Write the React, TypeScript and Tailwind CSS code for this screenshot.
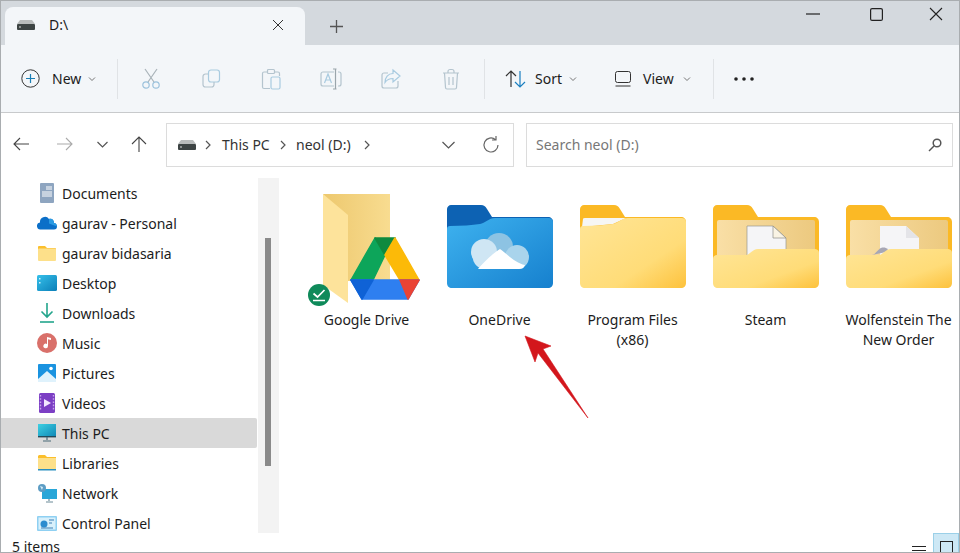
import React from "react";

const Chev = ({ c = "#666", s = 8 }: { c?: string; s?: number }) => (
  <svg width={s} height={s} viewBox="0 0 8 8" fill="none" stroke={c} strokeWidth="0.9"><path d="M1 2.5 4 5.5 7 2.5" /></svg>
);
const Right = () => (
  <svg width="8" height="10" viewBox="0 0 8 10" fill="none" stroke="#555" strokeWidth="1.2"><path d="M2 1 6 5 2 9" /></svg>
);
const DriveIcon = () => (
  <svg width="18" height="10" viewBox="0 0 18 10">
    <path d="M3 0h12l3 4H0z" fill="#b9bcbc" />
    <rect y="4" width="18" height="6" rx="1" fill="#3d4444" />
    <rect x="2" y="6.5" width="2" height="1" fill="#ddd" />
  </svg>
);
const Dis = ({ children }: { children: React.ReactNode }) => (
  <svg width="24" height="24" viewBox="0 0 24 24" fill="none" stroke="#b4c4ce" strokeWidth="1.2">{children}</svg>
);

const BACK = "M4 0h30c3 0 4 1 6 4l5 8h56c3 0 5 2 5 5v45H0V4c0-2 2-4 4-4z";
const FLAT_FRONT = "M0 24c0-2 1-3 3-3 12 0 22-1 30-2 5-1 9-6 15-6h53c3 0 5 1 5 4v61c0 3-2 5-5 5H5c-3 0-5-2-5-5z";

const Yellow = ({ id, children, flat }: { id: string; children?: React.ReactNode; flat?: boolean }) => (
  <svg width="106" height="83" viewBox="0 0 106 83">
    <defs>
      <linearGradient id={id} x1="0" y1="0" x2="1" y2="1">
        <stop offset="0" stopColor="#ffe596" />
        <stop offset="0.65" stopColor="#ffdc78" />
        <stop offset="1" stopColor="#fdc23c" />
      </linearGradient>
      <linearGradient id={`${id}b`} x1="0" y1="0" x2="1" y2="0">
        <stop offset="0" stopColor="#f9dfa6" />
        <stop offset="1" stopColor="#ecc97f" />
      </linearGradient>
    </defs>
    <path d={BACK} fill="#fbb925" />
    {!flat && <rect x="4" y="15" width="98" height="40" rx="2" fill={`url(#${id}b)`} />}
    {children}
    {flat ? (
      <path d={FLAT_FRONT} fill={`url(#${id})`} />
    ) : (
      <path d="M0 54c0-3 2-4 4-4h29c4 0 6-6 12-6h56c3 0 5 1 5 4v30c0 3-2 5-5 5H5c-3 0-5-2-5-5z" fill={`url(#${id})`} />
    )}
  </svg>
);

const Inner = ({ wolf }: { wolf?: boolean }) => (
  <>
    <path d="M34 21h26l13 12v20H34z" fill="#f5f5f7" stroke={wolf ? "none" : "#9a9a90"} strokeWidth="0.7" />
    <path d="M60 21v12h13z" fill={wolf ? "#e4e4e8" : "#f9f3e4"} stroke={wolf ? "none" : "#8c8c86"} strokeWidth="0.7" />
    {wolf && <path d="M26 50c4-1 6-6 9-7 3-1 5 0 7 1l-2 3z" fill="#a7a7b5" />}
  </>
);

const ProgramFiles = () => (
  <Yellow id="pf" flat>
    <path d="M3 14q0-1 2-1h41L33 19 2 22z" fill="#f6f6f4" />
  </Yellow>
);

const OneDriveFolder = () => (
  <svg width="106" height="83" viewBox="0 0 106 83">
    <defs>
      <linearGradient id="od" x1="0" y1="0" x2="1" y2="1">
        <stop offset="0" stopColor="#3eb2ef" />
        <stop offset="1" stopColor="#1680ce" />
      </linearGradient>
    </defs>
    <path d={BACK} fill="#0d62b3" />
    <path d={FLAT_FRONT} fill="url(#od)" />
    <circle cx="52" cy="42" r="14" fill="#8dc3e3" />
    <circle cx="70" cy="52" r="12" fill="#a9d4ec" />
    <circle cx="37" cy="47" r="13" fill="#cfe6f4" />
    <path d="M36 64a12 12 0 0 1 -10-14l20-4 6 18z" fill="#cfe6f4" />
    <path d="M31 64c5-6 14-15 22-20 7 5 15 14 25 16-1 3-3 4-6 4z" fill="#fff" />
  </svg>
);

const GoogleDrive = () => (
  <svg width="133" height="132" viewBox="0 0 133 132" className="block">
    <defs>
      <linearGradient id="gb" x1="0" y1="0" x2="1" y2="0">
        <stop offset="0" stopColor="#edc86e" />
        <stop offset="1" stopColor="#f8dc90" />
      </linearGradient>
    </defs>
    <path d="M23 16h67v87H48z" fill="url(#gb)" />
    <path d="M23 16l25 21v88L23 107z" fill="#fde39b" />
    <g strokeLinejoin="round" strokeWidth="1.5">
      <path d="M75 60 85 77 73 102H51z" fill="#0da55a" stroke="#0da55a" />
      <path d="M95 60h-20l10 17z" fill="#0f8a3f" stroke="#0f8a3f" />
      <path d="M95 60l24 42H100L85 77z" fill="#fcba08" stroke="#fcba08" />
      <path d="M51 102h68l-11 19H62z" fill="#2e7ff0" stroke="#2e7ff0" />
      <path d="M51 102h22l-11 19z" fill="#0f62d6" stroke="#0f62d6" />
      <path d="M100 102h19l-11 19z" fill="#ea4335" stroke="#ea4335" />
    </g>
    <circle cx="19" cy="117" r="11" fill="#0f8a5a" />
    <path d="M13.5 115.500l4 3.500 7-7" fill="none" stroke="#fff" strokeWidth="1.7" />
    <path d="M13 122.500h12" stroke="#fff" strokeWidth="1.5" />
  </svg>
);

const Side = {
  docs: (
    <svg width="14" height="20" viewBox="0 0 14 20">
      <rect width="14" height="20" rx="1" fill="#8ea5c0" />
      <path d="M6 4h6M6 6h6M2 9h10M2 11h10M2 13h10" stroke="#fff" strokeWidth="1" />
    </svg>
  ),
  cloud: (
    <svg width="20" height="14" viewBox="0 0 20 14">
      <path d="M4 13.500A3.500 3.500 0 0 1 3 6.500 5 5 0 0 1 12 3c3-1 5 1 5 4 2 0 3 2 3 3.500 0 2-1 3-3 3z" fill="#0b6fc8" />
      <path d="M12 3c3-1 5 1 5 4 2 0 3 2 3 3.500l-8-3z" fill="#2a9ae2" />
    </svg>
  ),
  folder: (
    <svg width="18" height="15" viewBox="0 0 18 15">
      <path d="M1 0h6l2 2h8a1 1 0 0 1 1 1v3H0V1a1 1 0 0 1 1-1z" fill="#fbbf2c" />
      <rect y="2.500" width="18" height="12.500" rx="1" fill="#fde08a" />
    </svg>
  ),
  desktop: (
    <svg width="20" height="16" viewBox="0 0 20 16">
      <defs><linearGradient id="dk" x1="0" y1="0" x2="1" y2="1"><stop offset="0" stopColor="#36c0ea" /><stop offset="1" stopColor="#0b7fb8" /></linearGradient></defs>
      <rect width="20" height="16" rx="1.500" fill="url(#dk)" />
      <rect x="2" y="3" width="1.500" height="1.500" fill="#cdeffa" /><rect x="2" y="7" width="1.500" height="1.500" fill="#cdeffa" />
    </svg>
  ),
  down: (
    <svg width="16" height="20" viewBox="0 0 16 20" fill="none" stroke="#23a58c" strokeWidth="1.600">
      <path d="M8 0v14M2.500 8.500 8 14l5.500-5.500" /><path d="M1 19h14" />
    </svg>
  ),
  music: (
    <svg width="20" height="20" viewBox="0 0 20 20">
      <circle cx="10" cy="10" r="10" fill="#d9706a" />
      <path d="M10 4l4 1v2l-3-.7V13a2.300 2.300 0 1 1-1-2z" fill="#fff" />
    </svg>
  ),
  pics: (
    <svg width="18" height="18" viewBox="0 0 18 18">
      <rect width="18" height="18" rx="1" fill="#1a93e0" />
      <path d="M0 15l9-8 9 8v3H0z" fill="#dff2fc" />
      <circle cx="13" cy="4.500" r="1.800" fill="#fff" />
    </svg>
  ),
  video: (
    <svg width="16" height="20" viewBox="0 0 16 20">
      <rect width="16" height="20" rx="1.500" fill="#7c3fc4" />
      <path d="M5 6l7 4-7 4z" fill="#f3e7ff" />
      <path d="M1.500 2v16M14.500 2v16" stroke="#c9a6ee" strokeWidth="1.400" strokeDasharray="1.600 1.600" />
    </svg>
  ),
  pc: (
    <svg width="18" height="18" viewBox="0 0 18 18">
      <defs><linearGradient id="pc" x1="0" y1="0" x2="1" y2="1"><stop offset="0" stopColor="#3fd0e2" /><stop offset="1" stopColor="#0f87b6" /></linearGradient></defs>
      <rect width="18" height="13" fill="url(#pc)" />
      <rect y="12" width="18" height="1.400" fill="#244a5a" />
      <path d="M9 13v3M5 17h8" stroke="#4a6a78" strokeWidth="1.200" />
    </svg>
  ),
  lib: (
    <svg width="18" height="16" viewBox="0 0 18 16">
      <path d="M1 0h6l2 2h9v4H0V1z" fill="#fbbf2c" />
      <rect y="3" width="18" height="11" fill="#fde08a" />
      <rect y="14" width="18" height="1.500" fill="#2a8fc0" />
    </svg>
  ),
  net: (
    <svg width="20" height="19" viewBox="0 0 20 19">
      <rect x="5" y="5" width="15" height="10" fill="#29a6d8" />
      <path d="M12 15v2M9 18h7" stroke="#6b8a98" strokeWidth="1.200" />
      <circle cx="5" cy="4" r="4" fill="#5d9dc4" />
      <path d="M3 2l3 1-1 3z" fill="#d6edf8" />
    </svg>
  ),
  cp: (
    <svg width="20" height="15" viewBox="0 0 20 15">
      <rect width="20" height="15" rx="1" fill="#8fd0f2" />
      <rect x="1.500" y="1.500" width="17" height="12" fill="#d8f0fb" />
      <circle cx="7" cy="8" r="3.500" fill="#2c8ccf" />
      <path d="M12 4h5M12 7h3M4 12h12" stroke="#3d7fb5" strokeWidth="1.200" />
    </svg>
  ),
};

const navItems: [React.ReactNode, string, boolean?][] = [
  [Side.docs, "Documents"],
  [Side.cloud, "gaurav - Personal"],
  [Side.folder, "gaurav bidasaria"],
  [Side.desktop, "Desktop"],
  [Side.down, "Downloads"],
  [Side.music, "Music"],
  [Side.pics, "Pictures"],
  [Side.video, "Videos"],
  [Side.pc, "This PC", true],
  [Side.lib, "Libraries"],
  [Side.net, "Network"],
  [Side.cp, "Control Panel"],
];

const files: [React.ReactNode, React.ReactNode][] = [
  [<GoogleDrive />, "Google Drive"],
  [<OneDriveFolder />, "OneDrive"],
  [<ProgramFiles />, "Program Files (x86)"],
  [<Yellow id="st"><Inner /></Yellow>, "Steam"],
  [<Yellow id="wf"><Inner wolf /></Yellow>, "Wolfenstein The New Order"],
];

export default function App() {
  return (
    <div
      className="relative flex h-[553px] w-[960px] flex-col overflow-hidden border border-[#a9adb0] bg-white text-[14px] leading-5 text-[#1c1c1c]"
      style={{ fontFamily: '"Noto Sans", sans-serif' }}
    >
      {/* Title bar */}
      <div className="flex h-[44px] shrink-0 items-end bg-[#d4d9de] pl-[4px]">
        <div className="flex h-[38px] w-[300px] items-center rounded-t-lg bg-[#f3f6f9] pb-[2px] pl-[12px]">
          <DriveIcon />
          <span className="ml-[14px] w-[223px]">D:\</span>
          <svg width="12" height="12" viewBox="0 0 12 12" stroke="#333" strokeWidth="1"><path d="M1 1l10 10M11 1 1 11" /></svg>
        </div>
        <svg className="mb-[12px] ml-[25px]" width="13" height="13" viewBox="0 0 13 13" stroke="#555" strokeWidth="1.300"><path d="M6.500 0v13M0 6.500h13" /></svg>
        <div className="mb-[24px] ml-auto flex items-center">
          <svg width="14" height="2" viewBox="0 0 14 2"><path d="M0 1h14" stroke="#222" strokeWidth="1.200" /></svg>
          <svg className="ml-[50px]" width="13" height="13" viewBox="0 0 13 13" fill="none" stroke="#222" strokeWidth="1.200"><rect x="0.600" y="0.600" width="11.800" height="11.800" rx="1.500" /></svg>
          <svg className="ml-[46px] mr-[16px]" width="14" height="14" viewBox="0 0 14 14" stroke="#222" strokeWidth="1.100"><path d="M1 1l12 12M13 1 1 13" /></svg>
        </div>
      </div>

      {/* Toolbar */}
      <div className="flex h-[68px] shrink-0 items-center border-b border-[#c8cacc] bg-[#f3f6f9] pl-[20px]">
        <svg width="19" height="19" viewBox="0 0 19 19" fill="none">
          <circle cx="9.500" cy="9.500" r="8.700" stroke="#333" strokeWidth="1" />
          <path d="M9.500 5v9M5 9.500h9" stroke="#1a7fb5" strokeWidth="1.200" />
        </svg>
        <span className="ml-[12px] w-[36px]">New</span>
        <Chev />
        <div className="ml-[21px] h-[40px] w-px bg-[#e0e3e6]" />
        <div className="ml-[21px] flex w-[324px] justify-between">
          <Dis>
            <path d="M6 2l9 13M18 2 9 15" stroke="#a9b3b9" />
            <circle cx="7" cy="18" r="3.200" stroke="#9cc2dc" />
            <circle cx="17" cy="18" r="3.200" stroke="#9cc2dc" />
          </Dis>
          <Dis>
            <rect x="9.500" y="3" width="11" height="12" rx="2.500" stroke="#a9cbe0" />
            <path d="M9 7H6.500A2.500 2.500 0 0 0 4 9.500v8A2.500 2.500 0 0 0 6.500 20h6a2.500 2.500 0 0 0 2.500-2.500V15" />
          </Dis>
          <Dis>
            <path d="M9 5H5a1.500 1.500 0 0 0-1.500 1.500V20A1.500 1.500 0 0 0 5 21.500h6M15 5h4a1.500 1.500 0 0 1 1.500 1.500V9" />
            <rect x="8.500" y="2.500" width="7" height="4" rx="1" />
            <rect x="12" y="10" width="9" height="12" rx="1.500" stroke="#a9cbe0" />
          </Dis>
          <Dis>
            <path d="M15 5H4a2 2 0 0 0-2 2v10a2 2 0 0 0 2 2h11M19 5h1a2 2 0 0 1 2 2v10a2 2 0 0 1-2 2h-1" />
            <path d="M14 2h3.500M14 22h3.500M16.500 2v20" stroke="#9aa5ab" />
            <path d="M5.500 16l3.500-9 3.500 9M7 13h5" stroke="#a9cbe0" />
          </Dis>
          <Dis>
            <path d="M9 6H5a2 2 0 0 0-2 2v11a2 2 0 0 0 2 2h12a2 2 0 0 0 2-2v-5" />
            <path d="M14 3l7 6-7 6v-3.500c-4 0-6 1-8 4 0-5 3-9 8-9z" stroke="#a9cbe0" />
          </Dis>
          <Dis>
            <path d="M4 6h16M9 6V4.500A2 2 0 0 1 11 2.500h2a2 2 0 0 1 2 2V6M5.500 6l1 14.500A1.500 1.500 0 0 0 8 22h8a1.500 1.500 0 0 0 1.500-1.500l1-14.500M10 10v8M14 10v8" />
          </Dis>
        </div>
        <div className="ml-[21px] h-[40px] w-px bg-[#e0e3e6]" />
        <svg className="ml-[20px]" width="22" height="18" viewBox="0 0 22 18" fill="none" strokeWidth="1.200">
          <path d="M6 17V1M1 6l5-5 5 5" stroke="#333" />
          <path d="M15 1v16M10 12l5 5 5-5" stroke="#1a7fc0" />
        </svg>
        <span className="ml-[8px] w-[34px]">Sort</span>
        <Chev />
        <svg className="ml-[38px]" width="16" height="16" viewBox="0 0 16 16" fill="none" stroke="#333" strokeWidth="1"><rect x="0.500" y="0.500" width="15" height="11" rx="2" /><path d="M0.500 15h15" /></svg>
        <span className="ml-[12px] w-[40px]">View</span>
        <Chev />
        <div className="ml-[22px] h-[40px] w-px bg-[#e0e3e6]" />
        <svg className="ml-[20px]" width="20" height="4" viewBox="0 0 20 4" fill="#222"><circle cx="2" cy="2" r="1.800" /><circle cx="10" cy="2" r="1.800" /><circle cx="18" cy="2" r="1.800" /></svg>
      </div>

      {/* Address row */}
      <div className="flex h-[65px] shrink-0 items-start bg-white pl-[12px] pt-[10px]">
        <div className="flex h-[44px] items-center pb-[2px]">
          <svg width="16" height="14" viewBox="0 0 16 14" fill="none" stroke="#444" strokeWidth="1.100"><path d="M16 7H1M7 1 1 7l6 6" /></svg>
          <svg className="ml-[28px]" width="16" height="14" viewBox="0 0 16 14" fill="none" stroke="#aaa" strokeWidth="1.100"><path d="M0 7h15M9 1l6 6-6 6" /></svg>
          <svg className="ml-[24px]" width="11" height="7" viewBox="0 0 11 7" fill="none" stroke="#555" strokeWidth="1.200"><path d="M0.500 1l5 5 5-5" /></svg>
          <svg className="ml-[23px]" width="16" height="16" viewBox="0 0 16 16" fill="none" stroke="#444" strokeWidth="1.100"><path d="M8 16V1M1 8l7-7 7 7" /></svg>
        </div>
        <div className="ml-[19px] flex h-[44px] w-[348px] items-center border border-[#dcdcdc] pl-[11px] pr-[13px]">
          <DriveIcon />
          <span className="ml-[8px]"><Right /></span>
          <span className="ml-[10px] w-[47px] whitespace-nowrap text-[#333]">This PC</span>
          <span className="ml-[10px]"><Right /></span>
          <span className="ml-[9px] w-[57px] whitespace-nowrap text-[#333]">neol (D:)</span>
          <span className="ml-[10px]"><Right /></span>
          <svg className="ml-[71px]" width="13" height="8" viewBox="0 0 13 8" fill="none" stroke="#555" strokeWidth="1.200"><path d="M0.500 1l6 6 6-6" /></svg>
          <svg className="ml-auto" width="18" height="18" viewBox="0 0 18 18" fill="none" stroke="#666" strokeWidth="1.200"><path d="M16 9a7 7 0 1 1-2.500-5.400M14 0v4h-4" /></svg>
        </div>
        <div className="ml-[12px] flex h-[44px] w-[427px] items-center justify-between border border-[#dcdcdc] pl-[9px] pr-[10px] text-[#777]">
          <span>Search neol (D:)</span>
          <svg width="14" height="14" viewBox="0 0 14 14" fill="none" stroke="#555" strokeWidth="1.500"><circle cx="9" cy="5" r="3.800" /><path d="M6 8l-5 5" /></svg>
        </div>
      </div>

      {/* Main */}
      <div className="flex h-[355px] shrink-0 overflow-hidden">
        <div className="w-[256px] shrink-0">
          {navItems.map(([icon, label, sel]) => (
            <div key={label} className={`flex h-[30px] shrink-0 items-center rounded-r-[2px] ${sel ? "bg-[#d9d9d9]" : ""}`}>
              <span className="flex w-[61px] justify-center pl-[31px]"><span className="flex w-[20px] shrink-0 justify-center">{icon}</span></span>
              <span className="whitespace-nowrap pt-[2px]">{label}</span>
            </div>
          ))}
        </div>
        <div className="ml-[1px] h-full w-[21px] shrink-0 bg-[#f3f3f3] pl-[7px] pt-[60px]">
          <div className="h-[228px] w-[6px] bg-[#8a8a8a]" />
        </div>
        <div className="flex flex-1 pl-[21px]">
          {files.map(([icon, label], i) => (
            <div key={i} className="flex w-[133px] shrink-0 flex-col items-center text-center">
              <div className={`flex h-[132px] items-start justify-center ${i === 0 ? "" : "pt-[27px]"}`}>{icon}</div>
              <div className="w-[118px]">{label}</div>
            </div>
          ))}
        </div>
      </div>

      {/* Status bar */}
      <div className="flex flex-1 items-start overflow-hidden pl-[11px] pt-[4px]">
        <span className="text-[14px] leading-5">5 items</span>
        <svg className="ml-auto mt-[8px]" width="14" height="11" viewBox="0 0 14 11" stroke="#222" strokeWidth="1"><path d="M0 1.500h14M0 5.500h14M0 9.500h14" /></svg>
        <div className="-mt-[4px] ml-[7px] flex h-[20px] w-[26px] items-end justify-center border border-[#9bd0e8] bg-[#cde8f5]">
          <div className="h-[11px] w-[13px] border border-b-0 border-[#222]" />
        </div>
      </div>

      {/* Annotation arrow */}
      <svg className="absolute left-[515px] top-[325px]" width="80" height="100" viewBox="0 0 80 100">
        <path d="M9 10 35 20 27 23 72 92 22 27 19 36z" fill="#d3161c" stroke="#d3161c" strokeWidth="0.600" />
      </svg>
    </div>
  );
}
